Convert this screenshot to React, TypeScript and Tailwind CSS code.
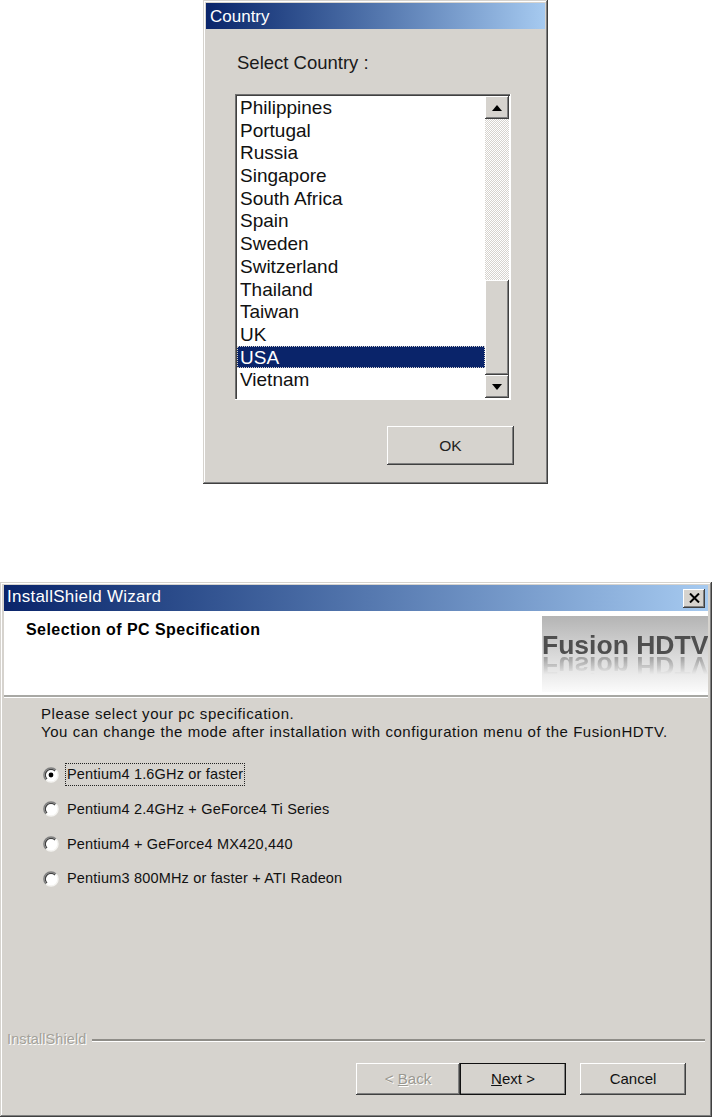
const COUNTRIES = [
  "Philippines",
  "Portugal",
  "Russia",
  "Singapore",
  "South Africa",
  "Spain",
  "Sweden",
  "Switzerland",
  "Thailand",
  "Taiwan",
  "UK",
  "USA",
  "Vietnam",
];

const SPECS = [
  "Pentium4 1.6GHz or faster",
  "Pentium4 2.4GHz + GeForce4 Ti Series",
  "Pentium4 + GeForce4 MX420,440",
  "Pentium3 800MHz or faster + ATI Radeon",
];

const RAISED =
  "bg-[#d6d3ce] shadow-[inset_-1px_-1px_0_#404040,inset_1px_1px_0_#ffffff,inset_-2px_-2px_0_#808080]";

const WINDOW_FRAME =
  "bg-[#d6d3ce] shadow-[inset_-1px_-1px_0_#404040,inset_1px_1px_0_#d6d3ce,inset_-2px_-2px_0_#808080,inset_2px_2px_0_#ffffff]";

function Radio({ checked }: { checked: boolean }) {
  return (
    <svg width="16" height="16" viewBox="0 0 16 16" className="shrink-0">
      <circle cx="8" cy="8" r="7" fill="#ffffff" />
      <path d="M13 3A7 7 0 0 0 3 13" fill="none" stroke="#808080" strokeWidth="1.5" />
      <path d="M12 4A5.6 5.6 0 0 0 4 12" fill="none" stroke="#404040" strokeWidth="1.2" />
      <path d="M3 13A7 7 0 0 0 13 3" fill="none" stroke="#f4f3f0" strokeWidth="1.4" />
      {checked && <circle cx="8" cy="8" r="2.4" fill="#000000" />}
    </svg>
  );
}

function ScrollButton({ dir }: { dir: "up" | "down" }) {
  return (
    <div className={`${RAISED} h-[23px] flex items-center justify-center`}>
      <svg width="10" height="6" viewBox="0 0 10 6">
        <path d={dir === "up" ? "M5 0L10 6H0Z" : "M0 0H10L5 6Z"} fill="#000000" />
      </svg>
    </div>
  );
}

function CountryDialog() {
  return (
    <div className={`${WINDOW_FRAME} ml-[203px] w-[345px] h-[484px] p-[3px] flex flex-col`}>
      <div className="h-[26px] shrink-0 bg-gradient-to-r from-[#0a246a] to-[#a6caf0] pl-[4px] pt-[1px] text-[17px] leading-[26px] text-white">
        Country
      </div>
      <div className="pl-[31px] pt-[23px] text-[18.5px] leading-[22px] text-[#1a1a1a]">Select Country :</div>
      <div className="ml-[29px] mt-[20px] w-[276px] h-[306px] p-[2px] bg-white shadow-[inset_-1px_-1px_0_#ffffff,inset_1px_1px_0_#707070,inset_2px_2px_0_#404040] flex">
        <div className="flex-1 min-w-0">
          {COUNTRIES.map((name) => (
            <div
              key={name}
              className={`h-[22.7px] pl-[3px] pt-[1px] text-[19px] leading-[22.7px] ${
                name === "USA"
                  ? "bg-[#0a246a] text-white outline-1 -outline-offset-1 outline-dotted outline-[#d6d3ce]"
                  : "text-[#111111]"
              }`}
            >
              {name}
            </div>
          ))}
        </div>
        <div className="w-[24px] shrink-0 flex flex-col bg-[repeating-conic-gradient(#ffffff_0_25%,#d6d3ce_0_50%)] bg-[length:2px_2px]">
          <ScrollButton dir="up" />
          <div className="flex-1" />
          <div className={`${RAISED} h-[95px]`} />
          <ScrollButton dir="down" />
        </div>
      </div>
      <div
        className={`${RAISED} ml-[181px] mt-[26px] w-[127px] h-[39px] flex items-center justify-center text-[15.5px] text-[#222222]`}
      >
        OK
      </div>
    </div>
  );
}

function Logo() {
  return (
    <div className="w-[166px] h-[76px] overflow-hidden bg-gradient-to-b from-[#b4b4b4] via-[#d8d8d8] to-[#fbfbfb] pt-[15px]">
      <div className="text-center text-[26.5px] leading-[28px] font-bold whitespace-nowrap text-[#4f4f4f] blur-[0.4px] [-webkit-box-reflect:below_-7px_linear-gradient(transparent_20%,rgba(0,0,0,0.55))]">
        Fusion HDTV
      </div>
    </div>
  );
}

function WizardButton({
  children,
  disabled,
  primary,
  className,
}: {
  children: React.ReactNode;
  disabled?: boolean;
  primary?: boolean;
  className: string;
}) {
  return (
    <div
      className={`${RAISED} h-[32px] flex items-center justify-center text-[15px] ${
        disabled ? "text-[#9a9890]" : "text-[#111111]"
      } ${primary ? "outline-1 -outline-offset-1 outline-[#111111]" : ""} ${className}`}
    >
      {children}
    </div>
  );
}

function WizardDialog() {
  return (
    <div className={`${WINDOW_FRAME} mt-[98px] w-[712px] h-[535px] pt-[3px] px-[4px] pb-[3px] flex flex-col`}>
      <div className="h-[26px] shrink-0 bg-gradient-to-r from-[#0a246a] to-[#a6caf0] px-[3px] flex items-center justify-between text-white">
        <span className="text-[17px] tracking-[0.25px] leading-[24px] pb-[2px]">InstallShield Wizard</span>
        <div className={`${RAISED} w-[22px] h-[19px] flex items-center justify-center`}>
          <svg width="11" height="10" viewBox="0 0 11 10">
            <path d="M1 0.5L10 9.5M10 0.5L1 9.5" stroke="#000000" strokeWidth="2" fill="none" />
          </svg>
        </div>
      </div>
      <div className="h-[84px] shrink-0 bg-white pl-[22px] flex justify-between">
        <div className="pt-[9px] text-[16px] tracking-[0.45px] leading-[20px] font-bold text-black">
          Selection of PC Specification
        </div>
        <div className="pt-[5px] pb-[3px]">
          <Logo />
        </div>
      </div>
      <div className="h-[2px] shrink-0 bg-[#a8a8a4] border-b border-white box-content" />
      <div className="pl-[37px] pt-[7px] text-[15px] leading-[18px] tracking-[0.55px] text-[#111111]">
        <div>Please select your pc specification.</div>
        <div>You can change the mode after installation with configuration menu of the FusionHDTV.</div>
      </div>
      <div className="pl-[39px] pt-[23px] flex flex-col gap-[13.4px]">
        {SPECS.map((spec, i) => (
          <div key={spec} className="h-[21.3px] flex items-center gap-[7px]">
            <Radio checked={i === 0} />
            <span
              className={`px-[1px] text-[14.5px] tracking-[0.18px] leading-[21px] text-[#111111] ${
                i === 0 ? "outline-1 outline-dotted outline-[#222222]" : ""
              }`}
            >
              {spec}
            </span>
          </div>
        ))}
      </div>
      <div className="flex-1" />
      <div className="flex items-center px-[3px] h-[18px]">
        <span className="pb-[1px] text-[14.5px] tracking-[0.1px] text-[#a3a199] [text-shadow:1px_1px_0_#ffffff]">
          InstallShield
        </span>
        <div className="ml-[5px] flex-1 h-[2px] bg-[#8f8d88] border-b border-white box-content" />
      </div>
      <div className="pt-[14px] pb-[19px] pr-[22px] flex justify-end">
        <WizardButton disabled className="w-[104px]">
          <span className="[text-shadow:1px_1px_0_#ffffff]">
            &lt; <span className="underline">B</span>ack
          </span>
        </WizardButton>
        <WizardButton primary className="w-[106px]">
          <span>
            <span className="underline">N</span>ext &gt;
          </span>
        </WizardButton>
        <WizardButton className="w-[106px] ml-[14px]">Cancel</WizardButton>
      </div>
    </div>
  );
}

export default function App() {
  return (
    <div className="w-[712px] h-[1117px] overflow-hidden bg-white font-['Liberation_Sans',Arial,sans-serif]">
      <CountryDialog />
      <WizardDialog />
    </div>
  );
}
